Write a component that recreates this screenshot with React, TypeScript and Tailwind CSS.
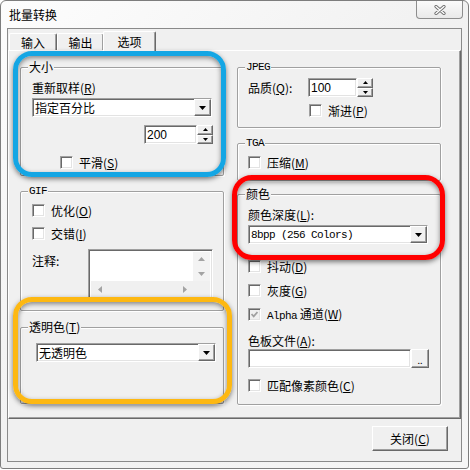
import type { ReactNode } from 'react';

const raised =
  'border border-t-white border-l-white border-r-[#696969] border-b-[#696969] shadow-[inset_-1px_-1px_0_#a0a0a0] bg-[#f0f0f0]';
const sunken =
  'border border-t-[#a0a0a0] border-l-[#a0a0a0] border-r-white border-b-white shadow-[inset_1px_1px_0_#696969,inset_-1px_-1px_0_#e3e3e3]';
const mono = "font-['Liberation_Mono',monospace] text-[11px] tracking-[-0.6px]";

function Key({ k }: { k: string }) {
  return (
    <>
      (<span className="underline underline-offset-1">{k}</span>)
    </>
  );
}

function Tri({ up = false, color = '#000', w = 7, h = 4 }: { up?: boolean; color?: string; w?: number; h?: number }) {
  const d = up ? `M0 ${h} L${w / 2} 0 L${w} ${h} Z` : `M0 0 L${w} 0 L${w / 2} ${h} Z`;
  return (
    <svg width={w} height={h} viewBox={`0 0 ${w} ${h}`}>
      <path d={d} fill={color} />
    </svg>
  );
}

function Side({ right = false }: { right?: boolean }) {
  const d = right ? 'M0 0 L4 3.5 L0 7 Z' : 'M4 0 L0 3.5 L4 7 Z';
  return (
    <svg width="4" height="7" viewBox="0 0 4 7">
      <path d={d} fill="#a3a3a3" />
    </svg>
  );
}

function Check({ label, checked = false, disabled = false }: { label: ReactNode; checked?: boolean; disabled?: boolean }) {
  return (
    <div className="flex h-[13px] items-center gap-[6px]">
      <span
        className={`w-[13px] h-[13px] shrink-0 flex items-center justify-center ${sunken} ${disabled ? 'bg-[#f0f0f0]' : 'bg-white'}`}
      >
        {checked && (
          <svg width="7" height="7" viewBox="0 0 7 7">
            <path d="M0.5 3 L2.7 5.3 L6.5 1" stroke="#a0a0a0" strokeWidth="1.8" fill="none" />
          </svg>
        )}
      </span>
      <span className="whitespace-nowrap">{label}</span>
    </div>
  );
}

function Combo({ value, w, isMono = false }: { value: string; w: string; isMono?: boolean }) {
  return (
    <div className={`h-[19px] flex bg-white ${sunken} ${w}`}>
      <div className={`flex-1 flex items-center pl-[2px] whitespace-pre ${isMono ? mono : ''}`}>{value}</div>
      <div className={`w-[17px] flex items-center justify-center ${raised}`}>
        <Tri />
      </div>
    </div>
  );
}

function Spin({ value, w }: { value: string; w: string }) {
  return (
    <div className="flex h-[19px]">
      <div
        className={`${w} bg-white ${sunken} flex items-center pl-[2px] font-['Liberation_Sans',sans-serif] text-[12px]`}
      >
        {value}
      </div>
      <div className="w-[16px] flex flex-col">
        <div className={`flex-1 flex items-center justify-center ${raised}`}>
          <Tri up w={5} h={3} />
        </div>
        <div className={`flex-1 flex items-center justify-center ${raised}`}>
          <Tri w={5} h={3} />
        </div>
      </div>
    </div>
  );
}

function Group({ title, isMono = false, className, children }: { title: ReactNode; isMono?: boolean; className: string; children?: ReactNode }) {
  return (
    <div
      className={`relative border border-[#a0a0a0] rounded-[2px] shadow-[inset_1px_1px_0_#fff,1px_1px_0_#fff] ${className}`}
    >
      <span className={`absolute left-[7px] -top-[8px] px-[1px] bg-[#f0f0f0] leading-[14px] ${isMono ? mono : ''}`}>
        {title}
      </span>
      {children}
    </div>
  );
}

function Tab({ label, selected = false, className }: { label: string; selected?: boolean; className: string }) {
  return (
    <div
      className={`relative flex justify-center bg-[#f0f0f0] border border-b-0 border-t-white border-l-white border-r-[#696969] rounded-t-[2px] shadow-[inset_-1px_0_0_#a0a0a0] ${selected ? 'z-10 -mb-[1px] pt-[3px]' : 'pt-[2px]'} ${className}`}
    >
      {label}
    </div>
  );
}

export default function App() {
  return (
    <div className="w-[470px] h-[470px] bg-white relative overflow-hidden text-[12px] leading-[14px] text-black font-['Noto_Sans_CJK_SC','Noto_Sans',sans-serif]">
      <div className="w-[469px] h-[469px] flex flex-col border border-[#7d7d7d] rounded-t-[6px] rounded-b-[3px] bg-gradient-to-br from-[#fdfdfd] via-[#f1f1f1] to-[#f6f6f6]">
        {/* title bar */}
        <div className="h-[27px] flex justify-between">
          <div className="pl-[8px] pt-[7px]">批量转换</div>
          <div className="mr-[5px] w-[47px] h-[18px] border border-t-0 border-[#8d8d8d] rounded-b-[4px] bg-gradient-to-b from-[#fbfbfb] to-[#e9e9e9] flex items-center justify-center">
            <svg width="12" height="10" viewBox="0 0 12 10">
              <path d="M2 1.5 L10 8.5 M10 1.5 L2 8.5" stroke="#707070" strokeWidth="3.2" strokeLinecap="round" />
              <path d="M2 1.5 L10 8.5 M10 1.5 L2 8.5" stroke="#ffffff" strokeWidth="1.4" strokeLinecap="round" />
            </svg>
          </div>
        </div>

        {/* client */}
        <div className="mx-[6px] h-[434px] border border-[#8a8a8a] bg-[#f0f0f0] flex flex-col">
          <div className="h-[21px] flex items-end pl-[1px]">
            <Tab label="输入" className="w-[48px] h-[17px]" />
            <Tab label="输出" className="w-[47px] h-[17px]" />
            <Tab label="选项" selected className="w-[53px] h-[20px] -ml-[1px]" />
          </div>

          <div className="h-[369px] border border-t-white border-l-white border-r-[#696969] border-b-[#696969] shadow-[inset_-1px_-1px_0_#a0a0a0] flex gap-[13px] pt-[16px] pl-[11px]">
            {/* left column */}
            <div className="w-[204px] flex flex-col">
              <Group title="大小" className="h-[109px] pt-[13px] pl-[11px]">
                <div>
                  重新取样<Key k="R" />
                </div>
                <div className="mt-[3px]">
                  <Combo value="指定百分比" w="w-[180px]" />
                </div>
                <div className="mt-[8px] pl-[112px]">
                  <Spin value="200" w="w-[53px]" />
                </div>
                <div className="mt-[12px] ml-[28px]">
                  <Check label={<>平滑<Key k="S" /></>} />
                </div>
              </Group>

              <Group title="GIF" isMono className="mt-[15px] h-[120px] pt-[12px] pl-[11px]">
                <Check label={<>优化<Key k="O" /></>} />
                <div className="mt-[10px]">
                  <Check label={<>交错<Key k="I" /></>} />
                </div>
                <div className="mt-[9px] flex">
                  <div className="w-[56px] pt-[5px]">注释:</div>
                  <div className={`w-[125px] h-[52px] bg-white ${sunken} p-[2px] flex flex-col`}>
                    <div className="flex flex-1">
                      <div className="flex-1" />
                      <div className="w-[17px] flex flex-col bg-[#f3f3f3]">
                        <div className="flex-1 flex items-center justify-center">
                          <Tri up color="#a3a3a3" w={7} h={4} />
                        </div>
                        <div className="flex-1 flex items-center justify-center">
                          <Tri color="#a3a3a3" w={7} h={4} />
                        </div>
                      </div>
                    </div>
                    <div className="h-[17px] flex bg-[#f0f0f0]">
                      <div className="w-[17px] flex items-center justify-center">
                        <Side />
                      </div>
                      <div className="flex-1" />
                      <div className="w-[17px] flex items-center justify-center">
                        <Side right />
                      </div>
                      <div className="w-[17px] bg-[#f0f0f0]" />
                    </div>
                  </div>
                </div>
              </Group>

              <Group title={<>透明色<Key k="T" /></>} className="mt-[16px] h-[77px] pt-[15px] pl-[15px]">
                <Combo value="无透明色" w="w-[180px]" />
              </Group>
            </div>

            {/* right column */}
            <div className="w-[204px] flex flex-col">
              <Group title="JPEG" isMono className="h-[61px] pt-[10px] pl-[10px]">
                <div className="flex items-center">
                  <div className="w-[60px]">
                    品质<Key k="Q" />:
                  </div>
                  <Spin value="100" w="w-[49px]" />
                </div>
                <div className="mt-[7px] ml-[61px]">
                  <Check label={<>渐进<Key k="P" /></>} />
                </div>
              </Group>

              <Group title="TGA" isMono className="mt-[15px] h-[38px] pt-[12px] pl-[10px]">
                <Check label={<>压缩<Key k="M" /></>} />
              </Group>

              <Group title="颜色" className="mt-[13px] h-[211px] pt-[13px] pl-[10px]">
                <div>
                  颜色深度<Key k="L" />:
                </div>
                <div className="mt-[3px]">
                  <Combo value="8bpp (256 Colors)" isMono w="w-[180px]" />
                </div>
                <div className="mt-[16px]">
                  <Check label={<>抖动<Key k="D" /></>} />
                </div>
                <div className="mt-[11px]">
                  <Check label={<>灰度<Key k="G" /></>} />
                </div>
                <div className="mt-[11px]">
                  <Check
                    checked
                    disabled
                    label={
                      <>
                        <span className={mono}>Alpha</span> 通道<Key k="W" />
                      </>
                    }
                  />
                </div>
                <div className="mt-[13px]">
                  色板文件<Key k="A" />:
                </div>
                <div className="mt-[1px] flex h-[19px]">
                  <div className={`w-[163px] bg-white ${sunken}`} />
                  <div className={`w-[18px] flex items-end justify-center pb-[2px] text-[9px] leading-[9px] ${raised}`}>..</div>
                </div>
                <div className="mt-[11px]">
                  <Check label={<>匹配像素颜色<Key k="C" /></>} />
                </div>
              </Group>
            </div>
          </div>

          <div className="flex-1 flex justify-end items-start pt-[7px] pr-[13px]">
            <div className={`w-[76px] h-[25px] flex items-center justify-center ${raised}`}>
              关闭<Key k="C" />
            </div>
          </div>
        </div>
      </div>

      {/* annotation rings */}
      <div className="absolute left-[13px] top-[51px] w-[213px] h-[126px] rounded-[19px] border-[5px] border-[#14a6e4] shadow-[0_2px_5px_rgba(0,0,0,0.5),inset_0_2px_5px_rgba(0,0,0,0.45)] pointer-events-none" />
      <div className="absolute left-[232px] top-[175px] w-[213px] h-[85px] rounded-[20px] border-[5px] border-[#ff0000] shadow-[0_2px_5px_rgba(0,0,0,0.5),inset_0_2px_5px_rgba(0,0,0,0.45)] pointer-events-none" />
      <div className="absolute left-[13px] top-[297px] w-[219px] h-[107px] rounded-[19px] border-[5px] border-[#fdb812] shadow-[0_2px_5px_rgba(0,0,0,0.5),inset_0_2px_5px_rgba(0,0,0,0.45)] pointer-events-none" />
    </div>
  );
}
